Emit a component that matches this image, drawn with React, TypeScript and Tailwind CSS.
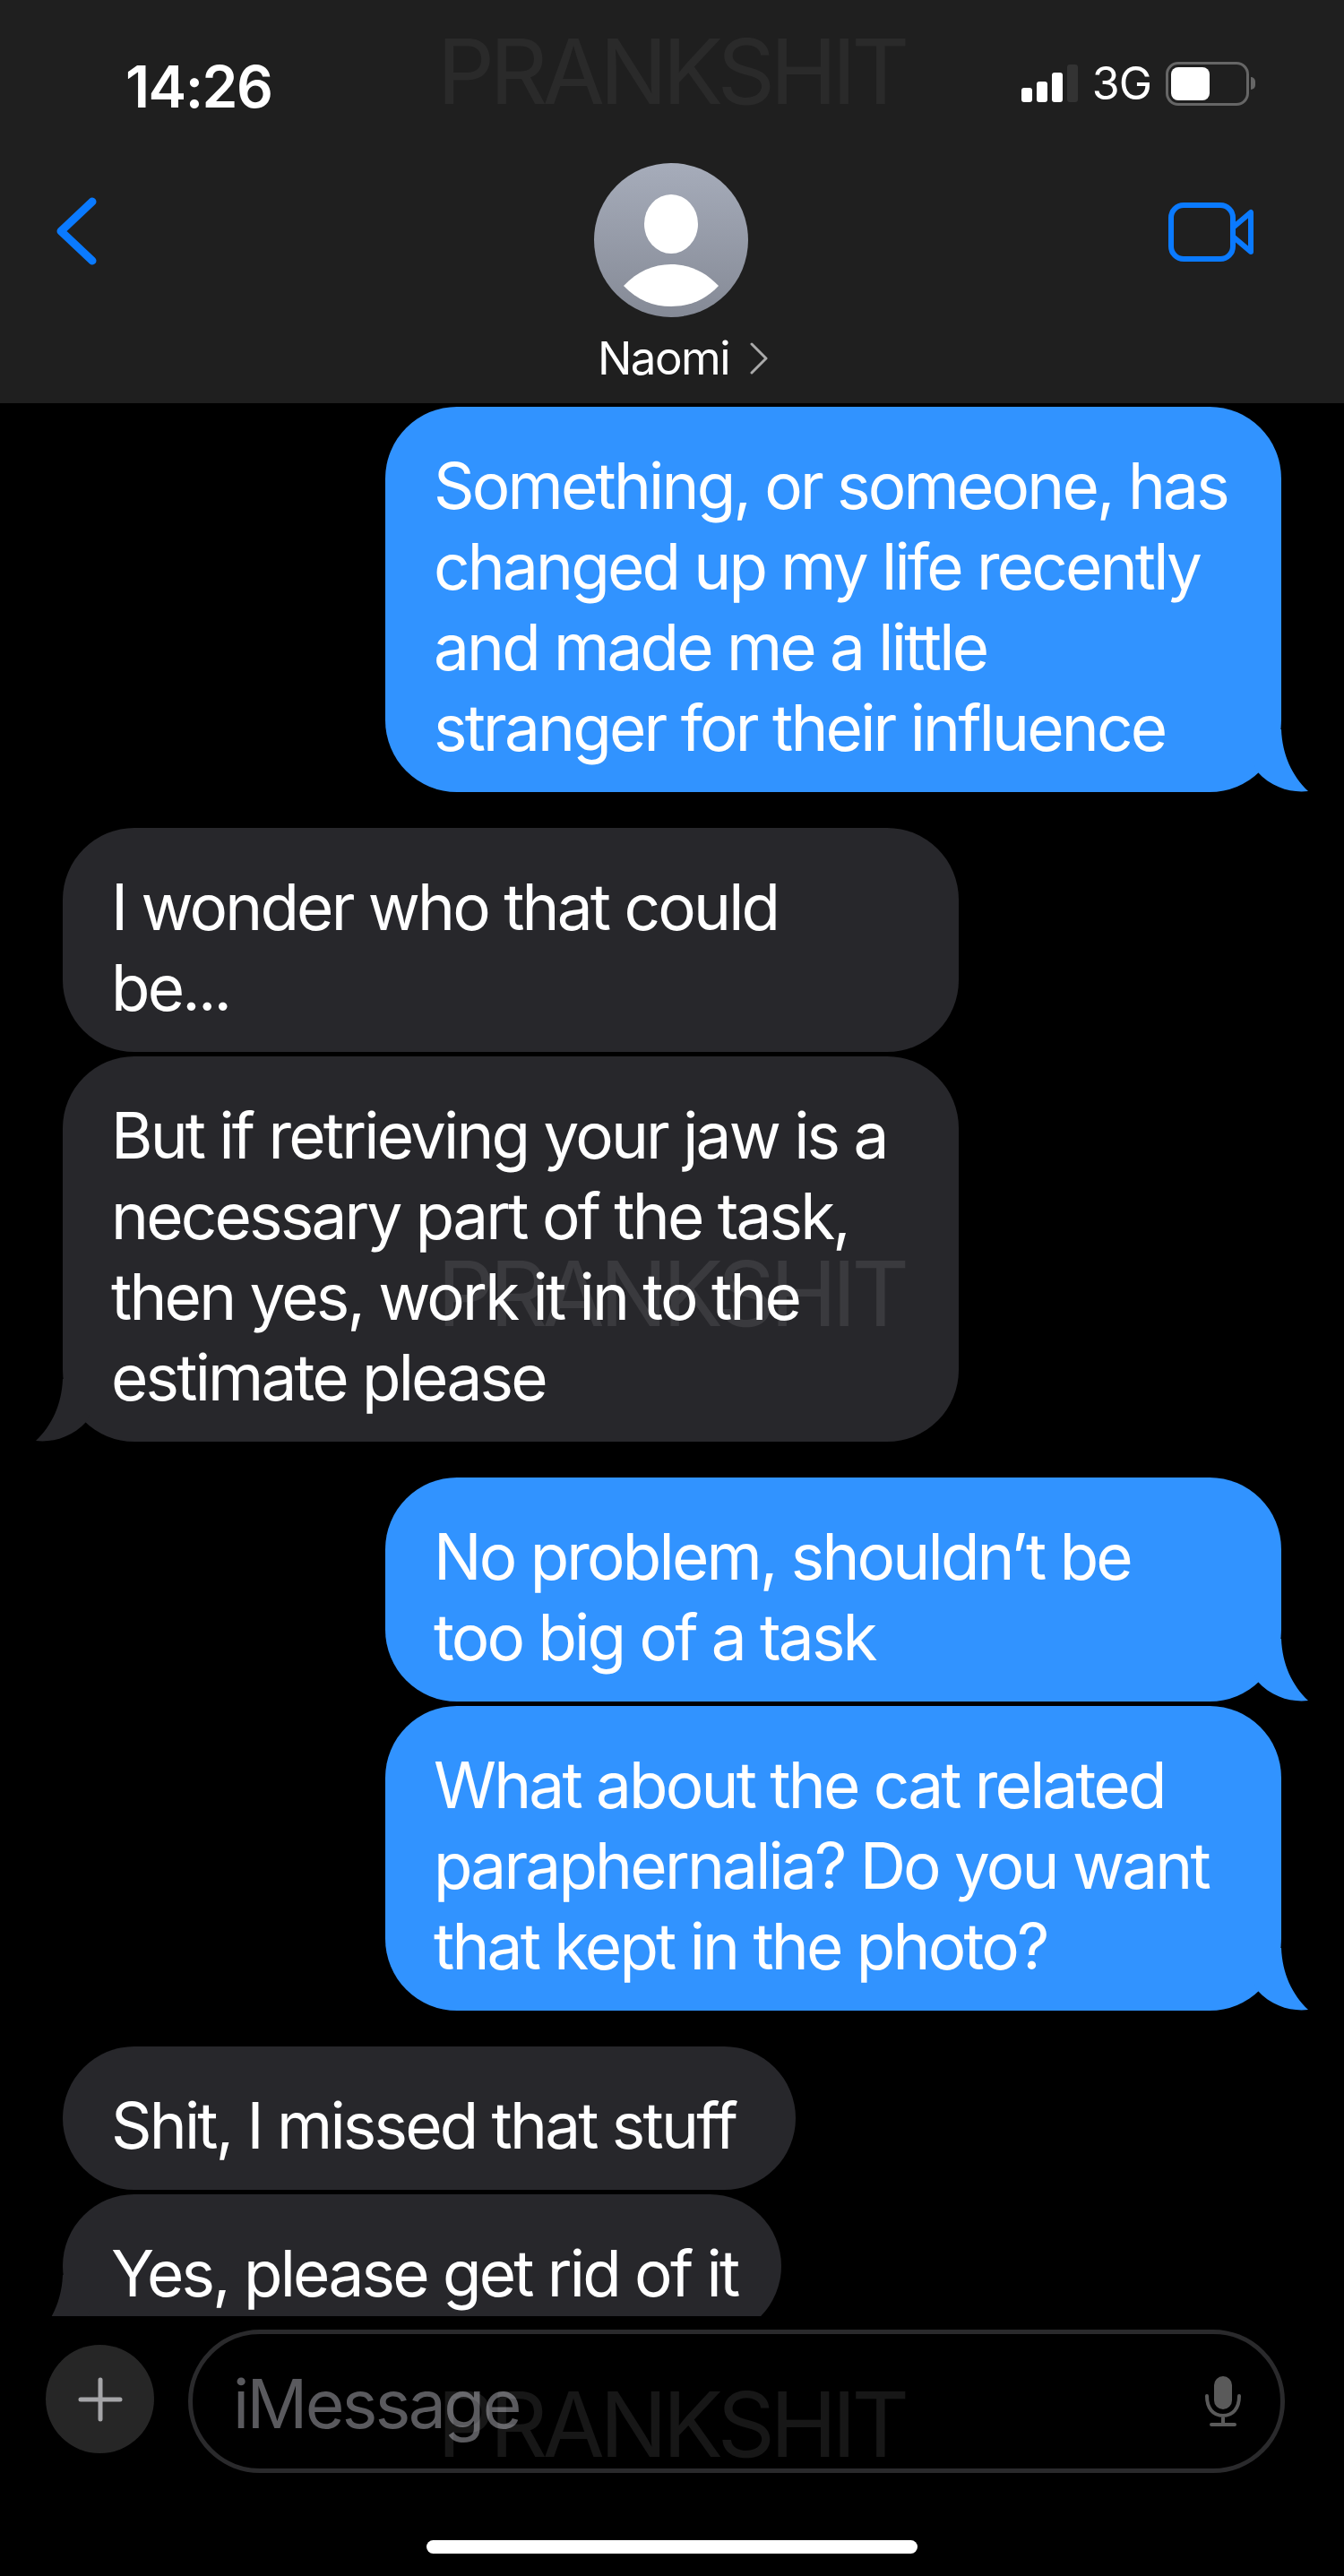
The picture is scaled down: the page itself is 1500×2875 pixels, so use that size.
import React from 'react'

const font = { fontFamily: 'Inter, "Liberation Sans", sans-serif' }

function Tail({ color, side }: { color: string; side: 'left' | 'right' }) {
  return (
    <svg
      viewBox="0 0 60 70"
      className={`absolute bottom-0 w-[60px] h-[70px] ${side === 'right' ? 'right-[-30px]' : 'left-[-30px] -scale-x-100'}`}
    >
      <path d="M0 0 L30 0 C31 28 42 52 60 69 C42 71 20 66 3 47 L0 40 Z" fill={color} />
    </svg>
  )
}

function Bubble({ lines, sent, tail, width }: { lines: string[]; sent?: boolean; tail?: boolean; width: string }) {
  return (
    <div
      className={`relative shrink-0 rounded-[80px] pt-[43px] pb-[27px] pl-[54px] text-[71px] leading-[90px] tracking-[-2.8px] text-white whitespace-nowrap ${width} ${
        sent ? 'self-end bg-[#3193ff]' : 'self-start bg-[#27272b]'
      }`}
    >
      {lines.map((l) => (
        <div key={l}>{l}</div>
      ))}
      {tail && <Tail color={sent ? '#3193ff' : '#27272b'} side={sent ? 'right' : 'left'} />}
    </div>
  )
}

function Watermark({ className }: { className: string }) {
  return (
    <div
      className={`absolute left-[488px] text-[100px] leading-none tracking-[-5.2px] pointer-events-none ${className}`}
    >
      PRANKSHIT
    </div>
  )
}

export default function App() {
  return (
    <div className="relative w-[1500px] h-[2875px] bg-black overflow-hidden flex flex-col" style={font}>
      <header className="h-[450px] shrink-0 bg-[#1f1f1f] text-white">
        <div className="flex items-start justify-between pl-[140px] pr-[99px] pt-[61px] h-[172px]">
          <span className="text-[64px] leading-[72px] font-semibold tracking-[-1.5px]">14:26</span>
          <div className="flex items-center gap-[16px] pt-[4px] mt-[3px]">
            <div className="flex items-end gap-[5px] h-[42px]">
              <div className="w-[12px] h-[16px] rounded-[3px] bg-white" />
              <div className="w-[12px] h-[23px] rounded-[3px] bg-white" />
              <div className="w-[12px] h-[33px] rounded-[3px] bg-white" />
              <div className="w-[12px] h-[42px] rounded-[3px] bg-[#333]" />
            </div>
            <span className="text-[50px] leading-[50px] tracking-[-1px]">3G</span>
            <div className="flex items-center gap-[2px]">
              <div className="w-[93px] h-[49px] rounded-[14px] border-[3px] border-[#666] p-[3px]">
                <div className="w-[43px] h-full rounded-[8px] bg-white" />
              </div>
              <div className="w-[5px] h-[14px] rounded-r-full bg-[#666]" />
            </div>
          </div>
        </div>
        <div className="grid grid-cols-[601px_172px_1fr] pl-[62px] pr-[100px] mt-[10px]">
          <svg viewBox="0 0 46 76" className="w-[46px] h-[76px] mt-[38px]" fill="none" stroke="#0a7aff" strokeWidth="9" strokeLinecap="round" strokeLinejoin="round">
            <path d="M41 5 L6 38 L41 71" />
          </svg>
          <div className="flex flex-col items-center">
            <svg viewBox="0 0 172 172" className="w-[172px] h-[172px] shrink-0">
              <defs>
                <linearGradient id="av" x1="0" y1="0" x2="0" y2="1">
                  <stop offset="0" stopColor="#a6acba" />
                  <stop offset="1" stopColor="#858a96" />
                </linearGradient>
              </defs>
              <circle cx="86" cy="86" r="86" fill="url(#av)" />
              <ellipse cx="86" cy="68" rx="30" ry="33" fill="#fff" />
              <path d="M33 137 C48 121 66 113 86 113 C106 113 124 121 139 137 C124 153 106 160 86 160 C66 160 48 153 33 137 Z" fill="#fff" />
            </svg>
            <div className="flex items-center gap-[23px] mt-[16px] ml-[26px] whitespace-nowrap">
              <span className="text-[51px] leading-[60px] tracking-[-1.5px]">Naomi</span>
              <svg viewBox="0 0 20 36" className="w-[20px] h-[36px]" fill="none" stroke="#aaa" strokeWidth="3" strokeLinecap="round" strokeLinejoin="round">
                <path d="M2 2 L18 18 L2 34" />
              </svg>
            </div>
          </div>
          <svg viewBox="0 0 96 66" className="w-[96px] h-[66px] mt-[44px] justify-self-end" fill="none" stroke="#0a7aff" strokeWidth="6" strokeLinejoin="round">
            <rect x="3" y="3" width="69" height="60" rx="14" />
            <path d="M72 28 L92 11 L92 55 L72 38" />
          </svg>
        </div>
      </header>

      <main className="h-[2135px] shrink-0 overflow-hidden flex flex-col px-[70px] pt-[4px]">
        <Bubble
          sent
          tail
          width="w-[1000px]"
          lines={['Something, or someone, has', 'changed up my life recently', 'and made me a little', 'stranger for their influence']}
        />
        <div className="h-[40px] shrink-0" />
        <Bubble width="w-[1000px]" lines={['I wonder who that could', 'be...']} />
        <div className="h-[5px] shrink-0" />
        <Bubble
          tail
          width="w-[1000px]"
          lines={['But if retrieving your jaw is a', 'necessary part of the task,', 'then yes, work it in to the', 'estimate please']}
        />
        <div className="h-[40px] shrink-0" />
        <Bubble sent tail width="w-[1000px]" lines={['No problem, shouldn’t be', 'too big of a task']} />
        <div className="h-[5px] shrink-0" />
        <Bubble
          sent
          tail
          width="w-[1000px]"
          lines={['What about the cat related', 'paraphernalia? Do you want', 'that kept in the photo?']}
        />
        <div className="h-[40px] shrink-0" />
        <Bubble width="w-[818px]" lines={['Shit, I missed that stuff']} />
        <div className="h-[5px] shrink-0" />
        <Bubble tail width="w-[802px]" lines={['Yes, please get rid of it']} />
      </main>

      <footer className="flex-1 flex flex-col items-center">
        <div className="w-full flex items-start pl-[51px] pr-[66px] gap-[38px] pt-[15px]">
          <div className="w-[121px] h-[121px] shrink-0 mt-[17px] rounded-full bg-[#262626] flex items-center justify-center">
            <svg viewBox="0 0 50 50" className="w-[50px] h-[50px]" stroke="#a5a5a8" strokeWidth="5" strokeLinecap="round">
              <path d="M25 3 V47 M3 25 H47" />
            </svg>
          </div>
          <div className="flex-1 h-[160px] rounded-[80px] border-[5px] border-[#2a2a2c] flex items-center justify-between pl-[45px] pr-[44px]">
            <span className="text-[75px] leading-[90px] tracking-[-2.6px] text-[#5a5a5e] mt-[6px]">iMessage</span>
            <svg viewBox="0 0 40 56" className="w-[40px] h-[56px]" fill="none" stroke="#5a5a5a" strokeWidth="4" strokeLinecap="round">
              <rect x="10" y="0" width="20" height="37" rx="10" fill="#5a5a5a" stroke="none" />
              <path d="M2 22 C2 36 9 44 20 44 C31 44 38 36 38 22 M20 44 V54 M7 54 H33" />
            </svg>
          </div>
        </div>
        <div className="w-[548px] h-[15px] rounded-full bg-white mt-[75px]" />
      </footer>

      <Watermark className="top-[30px] text-white/[0.05]" />
      <Watermark className="top-[1394px] text-white/[0.09]" />
      <Watermark className="top-[2656px] text-white/[0.09]" />
    </div>
  )
}
